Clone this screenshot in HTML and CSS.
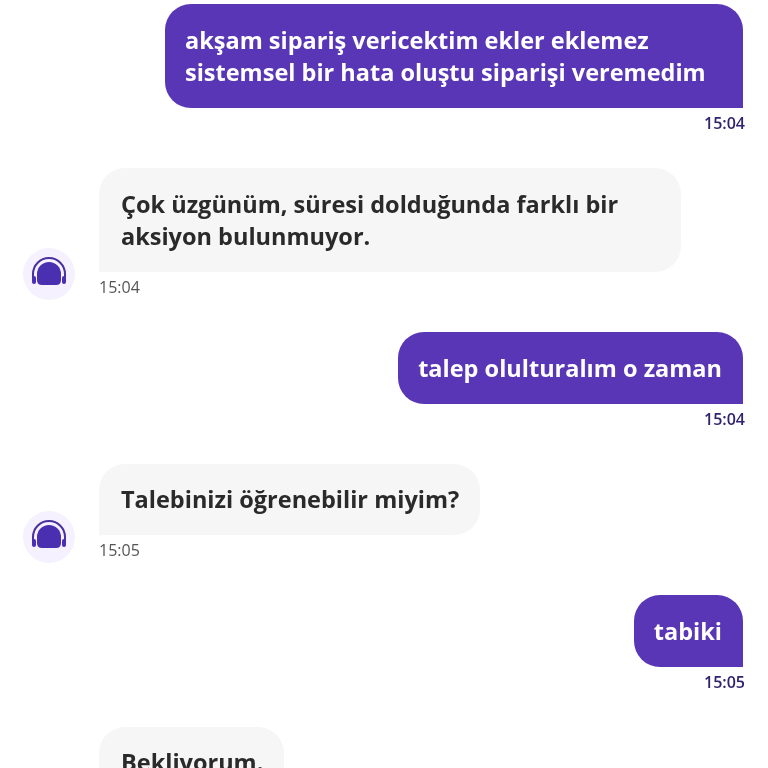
FILE: index.html
```html
<!DOCTYPE html>
<html lang="tr">
<head>
    <meta charset="UTF-8">
    <meta name="viewport" content="width=device-width, initial-scale=1.0">
    <title>Sohbet</title>
    <link rel="stylesheet" href="styles.css">
</head>
<body>
    <div class="chat">
        <div class="row row-out">
            <div class="msg">
                <div class="bubble bubble-out">akşam sipariş vericektim ekler eklemez sistemsel bir hata oluştu siparişi veremedim</div>
                <div class="time time-out">15:04</div>
            </div>
        </div>

        <div class="row row-in">
            <div class="avatar">
                <svg class="headset" viewBox="0 0 40 40">
                    <path class="band" d="M4 24 V20 A16 16 0 0 1 36 20 V24"/>
                    <path class="dome" d="M8 20 A12 12 0 0 1 32 20 V26 Q32 31 27 31 H13 Q8 31 8 26 Z"/>
                    <rect class="dome" x="3" y="22" width="4" height="8" rx="2"/>
                    <rect class="dome" x="33" y="22" width="4" height="8" rx="2"/>
                </svg>
            </div>
            <div class="msg">
                <div class="bubble bubble-in">Çok üzgünüm, süresi dolduğunda farklı bir aksiyon bulunmuyor.</div>
                <div class="time">15:04</div>
            </div>
        </div>

        <div class="row row-out">
            <div class="msg">
                <div class="bubble bubble-out">talep olulturalım o zaman</div>
                <div class="time time-out">15:04</div>
            </div>
        </div>

        <div class="row row-in">
            <div class="avatar">
                <svg class="headset" viewBox="0 0 40 40">
                    <path class="band" d="M4 24 V20 A16 16 0 0 1 36 20 V24"/>
                    <path class="dome" d="M8 20 A12 12 0 0 1 32 20 V26 Q32 31 27 31 H13 Q8 31 8 26 Z"/>
                    <rect class="dome" x="3" y="22" width="4" height="8" rx="2"/>
                    <rect class="dome" x="33" y="22" width="4" height="8" rx="2"/>
                </svg>
            </div>
            <div class="msg">
                <div class="bubble bubble-in">Talebinizi öğrenebilir miyim?</div>
                <div class="time">15:05</div>
            </div>
        </div>

        <div class="row row-out">
            <div class="msg">
                <div class="bubble bubble-out">tabiki</div>
                <div class="time time-out">15:05</div>
            </div>
        </div>

        <div class="row row-in">
            <div class="avatar">
                <svg class="headset" viewBox="0 0 40 40">
                    <path class="band" d="M4 24 V20 A16 16 0 0 1 36 20 V24"/>
                    <path class="dome" d="M8 20 A12 12 0 0 1 32 20 V26 Q32 31 27 31 H13 Q8 31 8 26 Z"/>
                    <rect class="dome" x="3" y="22" width="4" height="8" rx="2"/>
                    <rect class="dome" x="33" y="22" width="4" height="8" rx="2"/>
                </svg>
            </div>
            <div class="msg">
                <div class="bubble bubble-in">Bekliyorum.</div>
                <div class="time">15:05</div>
            </div>
        </div>
    </div>
</body>
</html>
```

FILE: styles.css
```css
html, body {
    height: 100%;
    overflow: hidden;
}
body {
    font-family: "Open Sans", "Noto Sans", sans-serif;
    margin: 0;
    padding: 0;
    background-color: #ffffff;
}
.chat {
    display: flex;
    flex-direction: column;
    gap: 32px;
    padding: 4px 23px 0 23px;
    filter: blur(0.6px);
}
.row {
    display: flex;
    align-items: flex-end;
}
.row-out {
    justify-content: flex-end;
}
.row-in {
    gap: 24px;
}
.msg {
    display: flex;
    flex-direction: column;
    max-width: 582px;
}
.row-out .msg {
    align-items: flex-end;
    max-width: 580px;
}
.row-in .msg {
    align-items: flex-start;
}
.bubble {
    font-size: 23.5px;
    font-weight: 700;
    line-height: 32.5px;
    border-radius: 26px;
}
.bubble-out {
    padding: 19.5px 21px 19.5px 20px;
    background-color: #5836b6;
    color: #ffffff;
    border-bottom-right-radius: 0;
    margin-right: 2px;
}
.bubble-in {
    padding: 19.5px 21px 19.5px 22px;
    background-color: #f6f6f6;
    color: #2a2a2a;
    border-bottom-left-radius: 0;
}
.time {
    font-size: 16px;
    line-height: 20px;
    margin-top: 5px;
    height: 23px;
    color: #555555;
}
.time-out {
    color: #2f2270;
    font-weight: 600;
}
.avatar {
    width: 52px;
    height: 52px;
    flex-shrink: 0;
    border-radius: 50%;
    background-color: #f5f1fe;
    display: flex;
    align-items: center;
    justify-content: center;
}
.headset {
    width: 40px;
    height: 40px;
}
.band {
    fill: none;
    stroke: #4a2fa0;
    stroke-width: 2;
}
.dome {
    fill: #4a2fb0;
}
```
